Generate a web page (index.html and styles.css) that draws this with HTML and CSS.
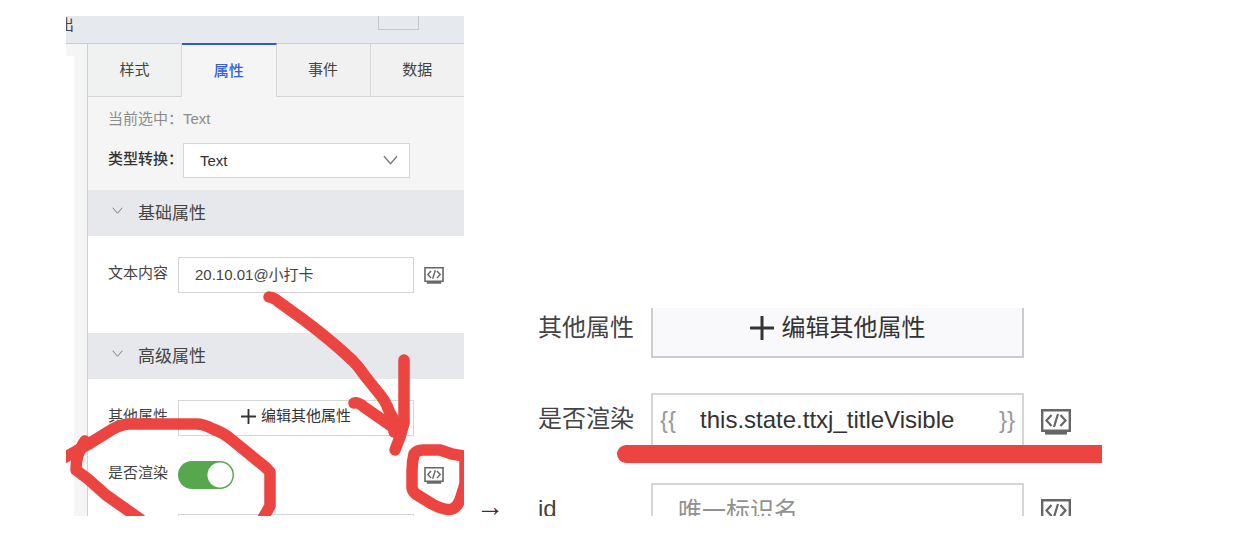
FILE: index.html
```html
<!DOCTYPE html>
<html lang="zh-CN">
<head>
<meta charset="utf-8">
<title>是否渲染</title>
<link rel="stylesheet" href="styles.css">
</head>
<body>
<svg class="defs" aria-hidden="true">
  <symbol id="code" viewBox="0 0 30 26">
    <path d="M1.2 1.2h27.6v20.6H1.2z" fill="none" stroke="currentColor" stroke-width="2.4"/>
    <path d="M4 23h22v2.6H4z" fill="currentColor"/>
    <path d="M10.5 6 5.5 11.5l5 5.5M19.5 6l5 5.500-5 5.500M17 5l-4 13" fill="none" stroke="currentColor" stroke-width="2.2"/>
  </symbol>
  <symbol id="plus" viewBox="0 0 24 24">
    <path d="M12 1v22M1 12h22" fill="none" stroke="currentColor" stroke-width="3" stroke-linecap="round"/>
  </symbol>
  <symbol id="chevron" viewBox="0 0 16 10">
    <path d="M1 1l7 8 7-8" fill="none" stroke="currentColor" stroke-width="1.4"/>
  </symbol>
</svg>
<main class="steps">
  <section class="shot before">
    <header class="topbar"><span class="export">出</span><span class="frame"></span></header>
    <div class="workspace">
      <div class="gutter"></div>
      <div class="panel">
        <nav class="tabs">
          <button class="tab first">样式</button>
          <button class="tab active">属性</button>
          <button class="tab">事件</button>
          <button class="tab">数据</button>
        </nav>
        <div class="summary">
          <div class="current"><span>当前选中：</span><span>Text</span></div>
          <div class="convert">
            <label for="type">类型转换：</label>
            <span class="picker">
              <select id="type"><option>Text</option></select>
              <svg class="caret"><use href="#chevron"/></svg>
            </span>
          </div>
        </div>
        <h2 class="section"><svg class="fold"><use href="#chevron"/></svg>基础属性</h2>
        <div class="fields basic">
          <div class="row">
            <label for="content">文本内容</label>
            <input class="box" id="content" type="text" value="20.10.01@小打卡">
            <button class="code" aria-label="绑定"><svg><use href="#code"/></svg></button>
          </div>
        </div>
        <h2 class="section"><svg class="fold"><use href="#chevron"/></svg>高级属性</h2>
        <div class="fields">
          <div class="row">
            <label for="other">其他属性</label>
            <button class="box add" id="other"><svg class="plus"><use href="#plus"/></svg>编辑其他属性</button>
            <span class="code"></span>
          </div>
          <div class="row">
            <label for="render">是否渲染</label>
            <span class="fill"><input class="switch" id="render" type="checkbox" checked></span>
            <button class="code" aria-label="绑定"><svg><use href="#code"/></svg></button>
          </div>
          <div class="row">
            <label for="ident"></label>
            <input class="box" id="ident" type="text" aria-label="id">
            <span class="code"></span>
          </div>
        </div>
      </div>
    </div>
    <svg class="marks" viewBox="0 0 398 500" aria-hidden="true">
      <g fill="none" stroke="#ec4541" stroke-width="11.5" stroke-linecap="round" stroke-linejoin="round">
        <path d="M203 281Q207 281 213 286L238 304Q266 325 287 345Q293 351 299 360L311 375Q320 385 323 395L327 402Q329 408 328 416"/>
        <path d="M338 344V407L334 421L329 434M288 387Q292 386 298 391L331 414"/>
        <path d="M-4 443L21 429L42 416Q52 409 62 408H130Q138 408 147 413Q158 417 166 424L182 437L193 446Q200 451 204 456V490L196 504"/>
        <path d="M19 425L17 428Q10 439 10 454L22 463L40 479L74 503"/>
        <path d="M348 438Q351 434 357 434H374L386 438L398 440L402 450M348 438Q346 446 346 455V472Q347 477 353 480L366 488Q379 495 386 493Q392 491 395 481L399 468V446"/>
      </g>
    </svg>
  </section>
  <div class="arrow">→</div>
  <section class="shot after">
    <div class="row">
      <label for="other2">其他属性</label>
      <button class="box add" id="other2"><svg class="plus"><use href="#plus"/></svg>编辑其他属性</button>
      <span class="code"></span>
    </div>
    <div class="row">
      <label for="render2">是否渲染</label>
      <span class="box expr"><i>{{</i><input id="render2" type="text" value="this.state.ttxj_titleVisible"><i>}}</i></span>
      <button class="code" aria-label="绑定"><svg><use href="#code"/></svg></button>
    </div>
    <div class="row">
      <label for="ident2">id</label>
      <input class="box" id="ident2" type="text" placeholder="唯一标识名">
      <button class="code" aria-label="绑定"><svg><use href="#code"/></svg></button>
    </div>
    <div class="underline"></div>
  </section>
</main>
</body>
</html>
```
FILE: styles.css
```css
* { box-sizing: border-box; }
body {
  margin: 0;
  background: #fff;
  color: #444;
  font: 15px/20px "Liberation Sans", "Noto Sans CJK SC", sans-serif;
}
button, input, select { font: inherit; color: inherit; margin: 0; padding: 0; border: 0; background: none; border-radius: 0; }
svg { display: block; flex: none; }
.defs { position: absolute; width: 0; height: 0; }

.steps {
  display: grid;
  grid-template-columns: 398fr 53px 585fr;
  grid-template-rows: 1fr;
  align-items: end;
  height: 100vh;
  padding: 16px 142px 22px 66px;
}
.shot { position: relative; overflow: hidden; min-width: 0; }
.before { align-self: stretch; }
.after { height: 208px; }
.arrow {
  padding-left: 12px;
  color: #333;
  font: 28px/18px "Liberation Serif", serif;
}

.topbar {
  display: flex;
  justify-content: space-between;
  height: 28px;
  padding-right: 45px;
  background: #e6e9ee;
  border-bottom: 1px solid #c9ccd0;
}
.export { width: 8px; overflow: hidden; display: flex; justify-content: flex-end; line-height: 18px; }
.frame { width: 41px; height: 14px; border: 1px solid #c4c6ca; border-top: 0; }
.workspace { display: flex; }
.gutter {
  width: 22px;
  background: linear-gradient(#fff, #fff) 0 12px / 8px 100% no-repeat #f5f5f5;
  border-right: 1px solid #cfcfcf;
}
.panel { flex: 1; min-width: 0; }

.tabs { display: flex; margin-top: -1px; }
.tab {
  flex: 1;
  height: 54px;
  background: #f1f1f1;
  border-top: 1px solid #ccced2;
  border-bottom: 1px solid #d6d6d6;
  border-right: 1px solid #d6d6d6;
}
.tab.first { background: #eff2f1; }
.tab:last-child { border-right: 0; }
.tab.active { background: #f5f5f5; color: #3560d4; font-weight: 500; border-top: 2px solid #2f5bd0; border-bottom-color: #f5f5f5; }

.summary { padding: 12px 54px 12px 20px; background: #f5f5f5; }
.current { display: flex; color: #8c8c8c; }
.convert { display: flex; align-items: center; margin-top: 14px; color: #333; }
.convert label { line-height: 24px; padding-bottom: 4px; font-weight: 500; }
.picker { position: relative; flex: 1; display: flex; }
.picker select {
  appearance: none;
  width: 100%;
  height: 35px;
  padding-left: 16px;
  background: #fff;
  border: 1px solid #d6d6d6;
}
.caret { position: absolute; right: 12px; top: 12px; width: 15px; height: 10px; color: #777; }

.section {
  display: flex;
  align-items: center;
  height: 46px;
  margin: 0;
  padding: 2px 0 0 24px;
  gap: 15px;
  background: #e7e8ec;
  font-size: 17px;
  font-weight: 400;
}
.fold { width: 11px; height: 7px; margin-bottom: 8px; color: #777; }

.fields { display: flex; flex-direction: column; gap: 21px; padding: 21px 20px 0; }
.basic { padding-bottom: 40px; }
.row { display: flex; align-items: center; gap: 10px; }
.fields .row { height: 36px; }
.fields label { width: 60px; padding-bottom: 4px; white-space: nowrap; }
.box { flex: 1; min-width: 0; height: 36px; border: 1px solid #d6d6d6; background: #fff; }
input.box { padding: 0 0 3px 16px; }
.fill { flex: 1; display: flex; }
.code { width: 20px; flex: none; }
.code svg { width: 100%; height: 17px; color: #666; }
.add { display: flex; align-items: center; justify-content: center; gap: 5px; padding-bottom: 4px; color: #333; }
.plus { width: 15px; height: 15px; }
.switch { appearance: none; width: 56px; height: 28px; border-radius: 14px; background: radial-gradient(circle at 42px 14px, #fff 12px, transparent 13px) #57a74f; }
.marks { position: absolute; left: 0; top: 0; width: 398px; height: 500px; }

.after { display: flex; flex-direction: column; gap: 35px; padding: 0 31px 0 21px; font-size: 24px; line-height: 32px; }
.after .row { flex: none; gap: 17px; height: 55px; }
.after .row:first-child { height: 50px; }
.after label { width: 96px; white-space: nowrap; padding-bottom: 4px; }
.after .box { height: 100%; border: 2px solid #d5d6d8; }
.after .add { border-top: 0; border-color: #cbccd0; background: #f9f9fb; gap: 8px; padding-bottom: 8px; }
.after .row:first-child label { padding-bottom: 10px; }
.after .plus { width: 24px; height: 24px; }
.after input.box { padding: 0 0 0 25px; }
.after input::placeholder { color: #919191; opacity: 1; }
.after .code { width: 30px; }
.after .code svg { height: 26px; margin-top: 3px; }
.expr { display: flex; align-items: center; padding: 0 7px 2px; color: #333; }
.expr input { flex: 1; min-width: 0; padding-left: 24px; }
.expr i { font-style: normal; color: #999; }
.underline { position: absolute; left: 100px; right: 0; top: 137px; height: 18px; border-radius: 9px 0 0 9px; background: #ec4541; }
```
